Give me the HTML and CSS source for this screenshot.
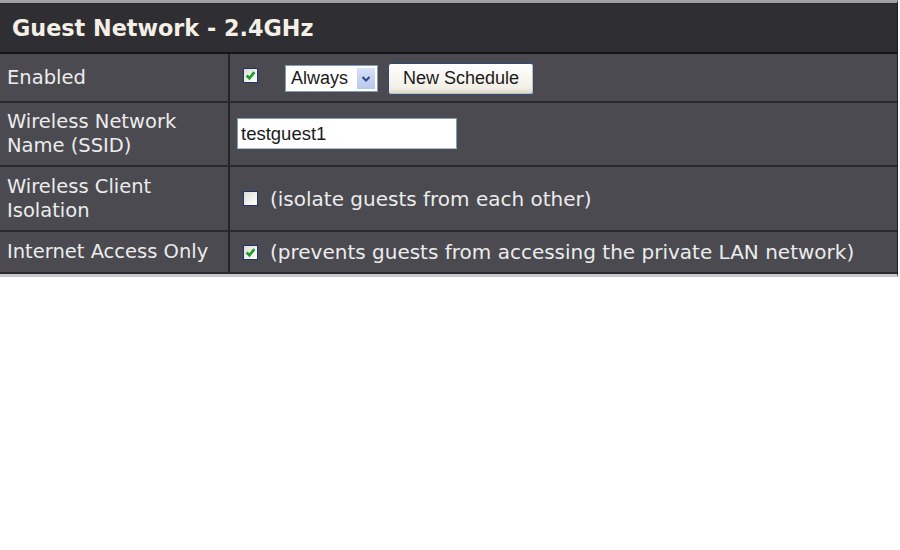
FILE: index.html
```html
<!DOCTYPE html>
<html>
<head>
<meta charset="utf-8">
<link rel="stylesheet" href="styles.css">
</head>
<body>
<div class="panel">
  <div class="title">Guest Network - 2.4GHz</div>
  <table class="grid">
    <tr class="r1">
      <td class="lbl">Enabled</td>
      <td class="val">
        <div class="line">
          <span class="cb on"><svg viewBox="0 0 10 10" width="11" height="11"><path d="M1.5 5 L4 7.5 L8.5 2" fill="none" stroke="#1c9a2a" stroke-width="2.4"/></svg></span>
          <span class="sel"><span class="sel-t">Always</span><span class="sel-b"><svg viewBox="0 0 10 8" width="10" height="8"><path d="M1.5 2 L5 5.5 L8.5 2" fill="none" stroke="#2b4a8a" stroke-width="2"/></svg></span></span>
          <span class="btn">New Schedule</span>
        </div>
      </td>
    </tr>
    <tr class="r2">
      <td class="lbl">Wireless Network<br>Name (SSID)</td>
      <td class="val"><span class="inp">testguest1</span></td>
    </tr>
    <tr class="r3">
      <td class="lbl">Wireless Client<br>Isolation</td>
      <td class="val"><div class="line"><span class="cb"></span><span class="note">(isolate guests from each other)</span></div></td>
    </tr>
    <tr class="r4">
      <td class="lbl">Internet Access Only</td>
      <td class="val"><div class="line"><span class="cb on"><svg viewBox="0 0 10 10" width="11" height="11"><path d="M1.5 5 L4 7.5 L8.5 2" fill="none" stroke="#1c9a2a" stroke-width="2.4"/></svg></span><span class="note">(prevents guests from accessing the private LAN network)</span></div></td>
    </tr>
  </table>
</div>
</body>
</html>
```
FILE: styles.css
```css
html, body {
  margin: 0;
  padding: 0;
  background: #ffffff;
}
.panel {
  width: 897px;
  border-top: 3px solid #a0a0a4;
  border-right: 1px solid #202024;
  border-bottom: 3px solid #c8c8cc;
  background: #4a4a50;
}
.title {
  height: 51px;
  box-sizing: border-box;
  border-top: 1px solid #2a2a2e;
  border-bottom: 2px solid #151517;
  background: #2f2f33;
  color: #f4f0e6;
  font-family: "DejaVu Sans", Verdana, sans-serif;
  font-weight: bold;
  font-size: 22.3px;
  line-height: 48px;
  padding-left: 12px;
}
.grid {
  width: 100%;
  border-collapse: collapse;
}
.grid td {
  border-bottom: 2px solid #2a2a2e;
  padding: 0;
  vertical-align: middle;
}
.lbl {
  width: 221px;
  padding-left: 7px !important;
  border-right: 2px solid #242428;
  color: #ececec;
  font-family: "DejaVu Sans", Verdana, sans-serif;
  font-size: 19.5px;
  line-height: 24px;
}
.val {
  padding-left: 13px !important;
}
.r1 td { height: 47px; }
.r2 td { height: 62px; }
.r3 td { height: 63px; }
.r4 td { height: 40px; }
.line {
  display: flex;
  align-items: center;
}
.cb {
  width: 15px;
  height: 15px;
  box-sizing: border-box;
  border: 1px solid #1d3568;
  background: linear-gradient(135deg, #dcdcd6, #ffffff);
  display: flex;
  align-items: center;
  justify-content: center;
}
.r1 .cb { margin-top: -4px; }
.note {
  margin-left: 12px;
  color: #ececec;
  font-family: "DejaVu Sans", Verdana, sans-serif;
  font-size: 20px;
}
.sel {
  margin-left: 27px;
  margin-top: 2px;
  display: flex;
  align-items: stretch;
  height: 27px;
  width: 93px;
  box-sizing: border-box;
  border: 1px solid #7f9db9;
  background: #ffffff;
  padding: 2px;
}
.sel-t {
  flex: 1;
  font-family: "Liberation Sans", Arial, sans-serif;
  font-size: 18px;
  color: #1a1a1a;
  line-height: 21px;
  padding-left: 3px;
}
.sel-b {
  width: 18px;
  background: linear-gradient(#d6e0f7, #b8c8ee);
  display: flex;
  align-items: center;
  justify-content: center;
}
.btn {
  margin-left: 10px;
  margin-top: 2px;
  height: 32px;
  width: 146px;
  box-sizing: border-box;
  border: 1px solid #2f4a7a;
  border-radius: 3px;
  background: linear-gradient(#ffffff, #f1efe6 80%, #d8d4c4);
  box-shadow: inset -1px -1px 0 #c7c2b0;
  font-family: "Liberation Sans", Arial, sans-serif;
  font-size: 18px;
  color: #1a1a1a;
  display: flex;
  align-items: center;
  justify-content: center;
}
.inp {
  display: block;
  margin-left: -6px;
  width: 220px;
  height: 31px;
  box-sizing: border-box;
  border: 1px solid #7f9db9;
  border-bottom-color: #a8bfd8;
  background: #ffffff;
  font-family: "Liberation Sans", Arial, sans-serif;
  font-size: 18.5px;
  color: #1a1a1a;
  line-height: 29px;
  padding-left: 3px;
  margin-top: -1px;
}
```
